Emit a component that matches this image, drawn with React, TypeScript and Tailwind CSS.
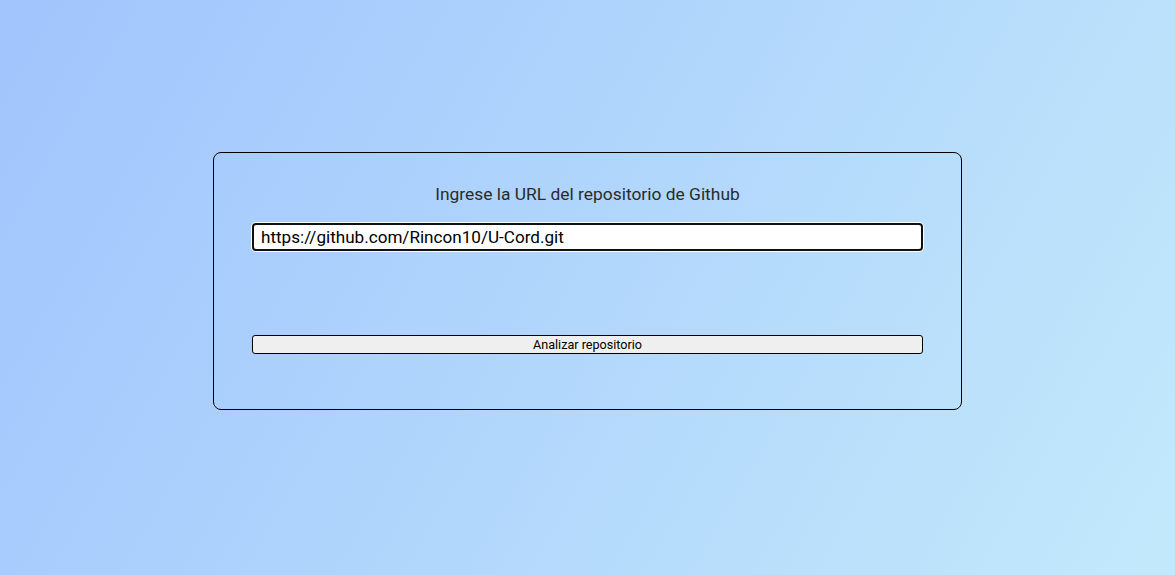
import React from "react";

export default function App() {
  return (
    <div
      className="w-[1175px] h-[575px] bg-[linear-gradient(120deg,#a1c4fd_0%,#c2e9fb_100%)] flex justify-center pt-[152px]"
      style={{ fontFamily: "Roboto, 'Liberation Sans', sans-serif" }}
    >
      <div className="w-[749px] h-[258px] border border-black rounded-[8px] px-[38px] pt-[30px] flex flex-col">
        <p className="text-center text-[17.4px] text-[#2a2a2a] leading-[22px]">
          Ingrese la URL del repositorio de Github
        </p>
        <input
          defaultValue="https://github.com/Rincon10/U-Cord.git"
          className="mt-[18px] h-[28px] w-full bg-white border-2 border-[#101010] rounded-[4px] pl-[7px] pr-[7px] text-[17.1px] text-black outline-none shadow-[0_0_0_1px_white]"
          style={{ fontFamily: "Roboto, 'Liberation Sans', sans-serif" }}
        />
        <button className="mt-[84px] h-[19px] w-full bg-[#efefef] border border-black rounded-[3px] text-[12.6px] leading-[16px] text-black">
          Analizar repositorio
        </button>
      </div>
    </div>
  );
}
